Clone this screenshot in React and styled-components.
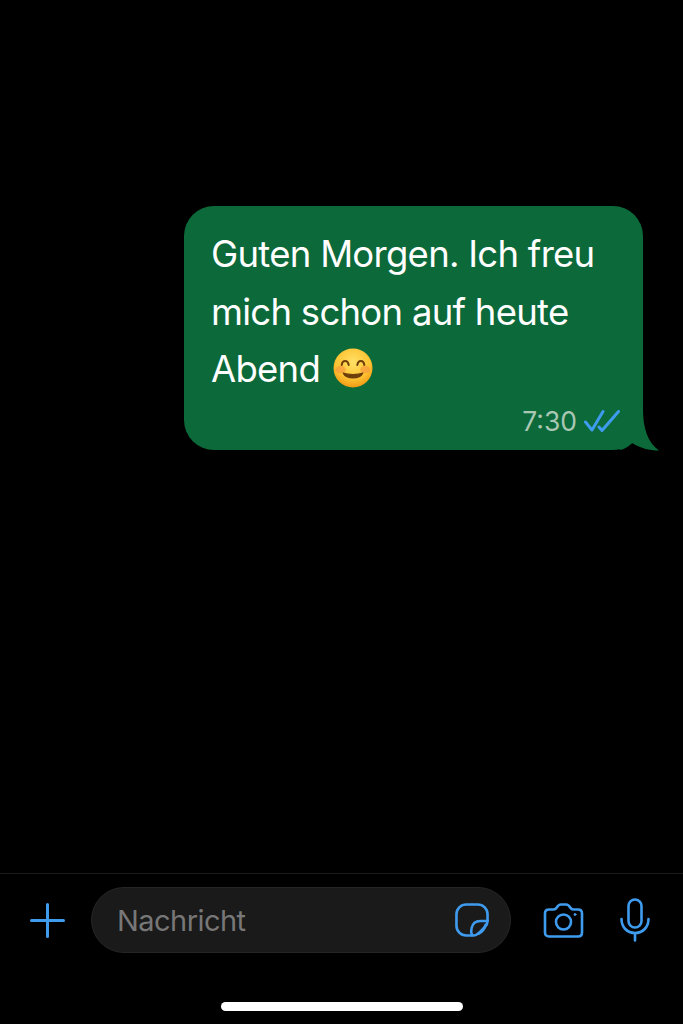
import React from 'react'
import styled, { createGlobalStyle } from 'styled-components'

const Global = createGlobalStyle`
    html, body {
        margin: 0;
        padding: 0;
        background: #000;
    }
    * {
        box-sizing: border-box;
    }
`

const Screen = styled.div`
    width: 683px;
    height: 1024px;
    background: #000;
    display: flex;
    flex-direction: column;
    overflow: hidden;
    font-family: Inter, "Liberation Sans", sans-serif;
`
const Chat = styled.div`
    flex: 1;
    display: flex;
    justify-content: flex-end;
    align-items: flex-start;
    padding: 206px 40px 0 0;
`
const Bubble = styled.div`
    position: relative;
    width: 459px;
    height: 244px;
    padding: 20px 24px 0 27px;
    background: #0c693a;
    border-radius: 30px;
`
const Tail = styled.svg`
    position: absolute;
    left: 436px;
    top: 204px;
`
const MessageText = styled.div`
    color: #fff;
    font-size: 36.5px;
    font-weight: 400;
    line-height: 57.5px;
    letter-spacing: -0.73px;
    white-space: nowrap;
`
const Smiley = styled.svg`
    display: inline-block;
    vertical-align: -6px;
    margin-left: 3px;
`
const Meta = styled.div`
    position: absolute;
    right: 23px;
    bottom: 14px;
    display: flex;
    align-items: center;
    gap: 7px;
    color: #a9c7b3;
    font-size: 26.5px;
    line-height: 30px;
`
const Composer = styled.div`
    height: 151px;
    border-top: 1px solid #1b1b1b;
    display: flex;
    flex-direction: column;
    align-items: center;
`
const InputRow = styled.div`
    width: 100%;
    display: flex;
    align-items: center;
    padding: 13px 33px 0 30px;
`
const Pill = styled.div`
    width: 420px;
    height: 66px;
    margin-left: 26px;
    margin-right: 32px;
    padding: 0 21px 0 25px;
    display: flex;
    align-items: center;
    justify-content: space-between;
    background: #1a1a1a;
    border: 1px solid #262626;
    border-radius: 33px;
`
const Placeholder = styled.span`
    color: #777;
    font-size: 29px;
    letter-spacing: -0.55px;
`
const Icon = styled.svg`
    display: block;
    flex-shrink: 0;
    fill: none;
    stroke: #3f9bee;
    stroke-linecap: round;
    stroke-linejoin: round;
`
const MicIcon = styled(Icon)`
    margin-left: 36px;
`
const HomeBar = styled.div`
    width: 242px;
    height: 9px;
    margin-top: 49px;
    border-radius: 5px;
    background: #fff;
`

const App = () => (
    <Screen>
        <Global />
        <Chat>
            <Bubble>
                <MessageText>Guten Morgen. Ich freu</MessageText>
                <MessageText>mich schon auf heute</MessageText>
                <MessageText>
                    Abend{' '}
                    <Smiley width="40" height="40" viewBox="0 0 39 39">
                        <defs>
                            <radialGradient id="face" cx="50%" cy="35%" r="65%">
                                <stop offset="0%" stopColor="#ffe066" />
                                <stop offset="65%" stopColor="#fdc433" />
                                <stop offset="100%" stopColor="#f39a14" />
                            </radialGradient>
                        </defs>
                        <circle cx="19.5" cy="19.5" r="19" fill="url(#face)" />
                        <ellipse cx="7.5" cy="21" rx="5" ry="3.6" fill="#f79a3e" opacity="0.7" />
                        <ellipse cx="31.5" cy="21" rx="5" ry="3.6" fill="#f79a3e" opacity="0.7" />
                        <path d="M8.500 16.500c.6-5 6-5 6.800 0M23.700 16.500c.8-5 6.200-5 6.800 0" fill="none" stroke="#6e3f0c" strokeWidth="2" strokeLinecap="round" />
                        <path d="M10 24.500c3 6.200 16 6.200 19 0-5 1.800-14 1.800-19 0z" fill="#6e3f0c" stroke="#6e3f0c" strokeWidth="1.200" strokeLinejoin="round" />
                    </Smiley>
                </MessageText>
                <Meta>
                    7:30
                    <Icon width="36" height="24" viewBox="0 0 36 24" strokeWidth="3">
                        <path d="M1.500 13l6.500 8L19 2.500M15 18l3 3.500L34.500 2.500" />
                    </Icon>
                </Meta>
                <Tail width="40" height="42" viewBox="0 0 40 42">
                    <path d="M23 0C23 18 28 33 39 40.500 29 40.500 20 38 12 33 8 37 4 39.500 0 40L0 0Z" fill="#0c693a" />
                </Tail>
            </Bubble>
        </Chat>
        <Composer>
            <InputRow>
                <Icon width="35" height="35" viewBox="0 0 35 35" strokeWidth="3">
                    <path d="M17.500 1.500v32M1.500 17.500h32" />
                </Icon>
                <Pill>
                    <Placeholder>Nachricht</Placeholder>
                    <Icon width="34" height="34" viewBox="0 0 35 35" strokeWidth="2.700">
                        <path d="M11.500 1.500h12c5.500 0 10 4.500 10 10v7c0 3-1 4.500-3 6.500l-5 5c-2 2-3.500 3.500-6.500 3.500h-7.500c-5.500 0-10-4.500-10-10v-12c0-5.500 4.500-10 10-10z" />
                        <path d="M17.500 33c-.8-2-1-5-.5-7 1-4.500 4.500-7.500 9-7.500h7.500M24.500 31.500c3.500-2 6-5 7-9" />
                    </Icon>
                </Pill>
                <Icon width="41" height="35" viewBox="0 0 41 35" strokeWidth="2.600">
                    <path d="M5.500 6.500h5c1.500 0 2.500-.7 3.300-2 1-1.700 2-3 4-3h5.400c2 0 3 1.300 4 3 .8 1.300 1.800 2 3.300 2h4.500c2.500 0 4 1.500 4 4v19c0 2.500-1.500 4-4 4h-29c-2.500 0-4-1.500-4-4v-19c0-2.500 1.500-4 4-4z" />
                    <circle cx="20.500" cy="19" r="7.500" />
                    <circle cx="32" cy="11.500" r="1" fill="#3f9bee" strokeWidth="1" />
                </Icon>
                <MicIcon width="30" height="44" viewBox="0 0 30 44" strokeWidth="2.600">
                    <rect x="8.500" y="1.500" width="13" height="28" rx="6.500" />
                    <path d="M1.500 21c0 8 5.500 14 13.500 14s13.500-6 13.500-14M15 35v7.500" />
                </MicIcon>
            </InputRow>
            <HomeBar />
        </Composer>
    </Screen>
)

export default App
